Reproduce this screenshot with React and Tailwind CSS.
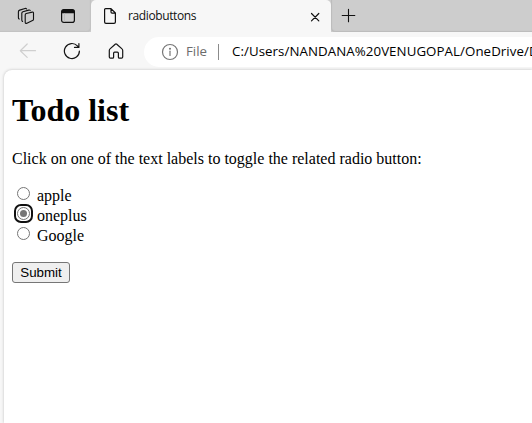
import React, { useState } from "react";

const stroke = { fill: "none", stroke: "currentColor", strokeLinecap: "round", strokeLinejoin: "round" };

function TabBar() {
  return (
    <header className="flex h-8 shrink-0 bg-[#cdcdcd] text-[#111]">
      <div className="flex w-[91px] shrink-0 items-center rounded-br-[4px] pl-[17px] shadow-[inset_-1px_-1px_1px_#c2c2c2]">
        <svg className="h-[18px] w-[18px]" viewBox="0 0 18 18" {...stroke} strokeWidth="1.1">
          <path d="M9.2 6.5 15.2 5.1Q16.5 4.9 16.5 6.2V12.2Q16.5 13.2 15.5 13.6L9.9 16.2Q8.2 16.8 8.2 15.2V8Q8.2 6.9 9.2 6.5Z" />
          <path d="M5.6 14.4Q4.8 14 4.8 13V6.3Q4.8 5.2 5.9 4.8L11.7 3.1Q12.8 2.8 13.2 3.6" />
          <path d="M2.2 12.1Q1.4 11.7 1.4 10.7V4.8Q1.4 3.5 2.7 3.1L8 1.5Q9.1 1.2 9.6 2" />
        </svg>
        <svg className="ml-[25px] h-4 w-4" viewBox="0 0 16 16">
          <rect x="1.6" y="1.6" width="12.8" height="12.8" rx="2.2" {...stroke} strokeWidth="1.2" />
          <path d="M1.5 5.2V3.5Q1.5 1.5 3.5 1.5H12.5Q14.5 1.5 14.5 3.5V5.2Z" fill="currentColor" />
          <path d="M4.5 5V14" stroke="#b5b5b5" strokeWidth="0.7" />
        </svg>
      </div>
      <div className="flex w-60 shrink-0 items-center rounded-t-[5px] bg-[#f7f7f7] pl-3">
        <svg className="h-[18px] w-[14px]" viewBox="0 0 14 18" {...stroke} strokeWidth="1.2">
          <path d="M2.6 1.6H8L12.4 6V15Q12.4 16.4 11 16.4H3Q1.6 16.4 1.6 15V2.6Q1.6 1.6 2.6 1.6ZM8 1.8V5.1Q8 6.1 9 6.1H12.3" />
        </svg>
        <span className="ml-[11px] w-[180px] text-[12px] leading-4 tracking-[-0.38px]">radiobuttons</span>
        <svg className="ml-[2px] mt-px h-[10px] w-[10px]" viewBox="0 0 10 10" {...stroke} strokeWidth="1.2">
          <path d="M1.5 1.5 8.8 8.8M8.8 1.5 1.5 8.8" />
        </svg>
      </div>
      <div className="flex grow items-center rounded-bl-[4px] pl-[10px] shadow-[inset_1px_-1px_1px_#bcbcbc]">
        <svg className="h-4 w-4" viewBox="0 0 16 16" {...stroke} strokeWidth="1.1">
          <path d="M1.2 7.5H13.8M7.5 1.2V13.8" />
        </svg>
      </div>
    </header>
  );
}

function Toolbar() {
  return (
    <nav className="flex h-[38px] shrink-0 items-center overflow-hidden text-[#151515]">
      <svg className="ml-[19px] h-[18px] w-[18px] shrink-0 text-[#cfcfcf]" viewBox="0 0 18 18" {...stroke} strokeWidth="1.2">
        <path d="M8.2 2 1.3 8.7 8.2 15.4M1.5 8.7H16.5" />
      </svg>
      <svg className="ml-[26px] h-[18px] w-[18px] shrink-0" viewBox="0 0 18 18" {...stroke} strokeWidth="1.2">
        <path d="M16.4 9A7.5 7.5 0 1 1 14.4 3.9L15.6 5.2M15.9 1.6V5.4H11.5" />
      </svg>
      <svg className="ml-[26px] h-[18px] w-[18px] shrink-0" viewBox="0 0 18 18" {...stroke} strokeWidth="1.2">
        <path d="M8.2 2.2Q9 1.5 9.8 2.2L15 6.9Q15.7 7.5 15.7 8.5V15Q15.7 16.2 14.5 16.2H12.4Q11.4 16.2 11.4 15.2V11.2Q11.4 10.2 10.4 10.2H7.6Q6.6 10.2 6.6 11.2V15.2Q6.6 16.2 5.6 16.2H3.5Q2.3 16.2 2.3 15V8.5Q2.3 7.5 3 6.9Z" />
      </svg>
      <div className="ml-[19px] mt-px flex h-[30px] w-[400px] shrink-0 items-center rounded-l-full bg-white pl-[17px] text-[13.3px]">
        <svg className="h-[18px] w-[18px] shrink-0 text-[#767676]" viewBox="0 0 18 18" {...stroke} strokeWidth="1.2">
          <circle cx="9" cy="9" r="7.5" />
          <path d="M9 8.2V12.5" />
          <circle cx="9" cy="5.7" r=".45" fill="currentColor" />
        </svg>
        <span className="ml-[7px] w-8 shrink-0 text-[#6c6c6c]">File</span>
        <span className="h-4 w-px shrink-0 bg-[#8b8b8b]" />
        <span className="ml-[13px] whitespace-nowrap tracking-[0.06px] text-black">C:/Users/NANDANA%20VENUGOPAL/OneDrive/D</span>
      </div>
    </nav>
  );
}

function Choice({ label, checked, onSelect }) {
  return (
    <label className="flex h-5 items-start">
      <input type="radio" name="choice" className="peer sr-only" checked={checked} onChange={onSelect} />
      <span
        className={
          "ml-[2px] -mt-px flex h-[19px] w-[19px] shrink-0 items-center justify-center rounded-[7px] border-2 " +
          (checked ? "border-[#101010]" : "border-transparent")
        }
      >
        <span className="flex h-[13px] w-[13px] items-center justify-center rounded-full border border-[#767676]">
          {checked && <span className="h-[7px] w-[7px] rounded-full bg-[#767676]" />}
        </span>
      </span>
      <span className="ml-1 mt-px leading-5">{label}</span>
    </label>
  );
}

export default function App() {
  const [choice, setChoice] = useState("oneplus");
  return (
    <div className="flex h-[423px] w-[532px] flex-col overflow-hidden bg-[#f7f7f7] font-['Open_Sans',sans-serif]">
      <TabBar />
      <Toolbar />
      <main className="ml-1 grow rounded-tl-[8px] bg-white pl-2 font-['Liberation_Serif',serif] text-[16px] text-black shadow-[0_0_3px_#bdbdbd]">
        <h1 className="pt-[22px] text-[32px] leading-[37px] font-bold">Todo list</h1>
        <p className="mt-[20px] whitespace-nowrap leading-5">Click on one of the text labels to toggle the related radio button:</p>
        <form className="mt-[16px]" onSubmit={(e) => e.preventDefault()}>
          {["apple", "oneplus", "Google"].map((name) => (
            <Choice key={name} label={name} checked={choice === name} onSelect={() => setChoice(name)} />
          ))}
          <button className="mt-[17px] flex h-[21px] w-[58px] items-center justify-center rounded-[3px] border border-[#767676] bg-[#efefef] font-['Liberation_Sans',sans-serif] text-[13.333px]">
            Submit
          </button>
        </form>
      </main>
    </div>
  );
}
